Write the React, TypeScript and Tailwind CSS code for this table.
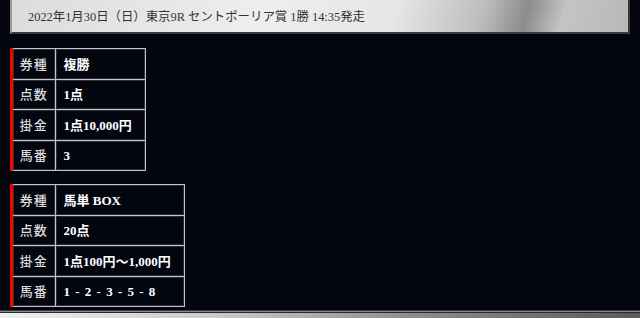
import React from 'react'

const font = { fontFamily: '"Liberation Serif", "Noto Sans CJK JP", serif' }

type Row = { k: string; v: string; wide?: boolean }

const bet1: Row[] = [
  { k: '券種', v: '複勝' },
  { k: '点数', v: '1点' },
  { k: '掛金', v: '1点10,000円' },
  { k: '馬番', v: '3' },
]

const bet2: Row[] = [
  { k: '券種', v: '馬単 BOX' },
  { k: '点数', v: '20点' },
  { k: '掛金', v: '1点100円～1,000円' },
  { k: '馬番', v: '1 - 2 - 3 - 5 - 8', wide: true },
]

function BetTable({ rows, width }: { rows: Row[]; width: string }) {
  return (
    <div className="flex border-l-[3px] border-[#ff0000]">
      <table className={`${width} border-collapse text-[13px] text-white`}>
        <tbody>
          {rows.map((r) => (
            <tr key={r.k} className="h-[30.5px]">
              <td className="w-[42px] border border-l-0 border-[#c4c4c4] pt-px text-center font-medium tracking-[1px] text-[#dcdcdc] shadow-[inset_0_0_0_1px_#2c2c34]">
                {r.k}
              </td>
              <td
                className={`border border-[#c4c4c4] pl-2 pt-px font-bold whitespace-pre shadow-[inset_0_0_0_1px_#2c2c34] ${
                  r.wide ? '[word-spacing:2px]' : ''
                }`}
              >
                {r.v}
              </td>
            </tr>
          ))}
        </tbody>
      </table>
    </div>
  )
}

export default function App() {
  return (
    <div className="flex h-[318px] w-[640px] flex-col overflow-hidden bg-[#03050f]" style={font}>
      <div className="ml-[10px] mr-[10px] flex h-[34px] shrink-0 items-center border-b-2 border-l-2 border-r-2 border-b-[#3a3a3a] border-l-[#9a9a9a] border-r-[#3a3a3a] bg-[linear-gradient(105deg,#dcdcdc_0%,#eeeeee_40%,#e6e6e6_62%,#bdbdbd_76%,#8c8c8c_83%,#c4c4c4_89%,#b8b8b8_100%)] pl-4 pt-[2px] text-[12.4px] text-[#333]">
        2022年1月30日（日）東京9R セントポーリア賞 1勝 14:35発走
      </div>

      <div className="ml-[10px] mt-[14px] flex flex-col gap-[13px]">
        <BetTable rows={bet1} width="w-[133px]" />
        <BetTable rows={bet2} width="w-[172px]" />
      </div>

      <div className="mt-auto flex flex-col">
        <div className="h-px bg-[#3a3a3a]" />
        <div className="h-px bg-[#8a8a8a]" />
        <div className="h-px bg-[#2a2a2a]" />
        <div className="h-[5px] bg-[linear-gradient(90deg,#f0f0f0_0%,#c8c8c8_35%,#8c8c8c_65%,#5a5a5a_100%)]" />
      </div>
    </div>
  )
}
